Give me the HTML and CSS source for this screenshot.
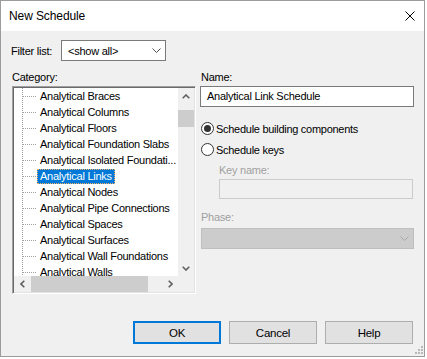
FILE: index.html
```html
<!DOCTYPE html>
<html>
<head>
<meta charset="utf-8">
<link rel="stylesheet" href="styles.css">
</head>
<body>
<div class="window">
  <div class="titlebar">
    <span class="title">New Schedule</span>
    <svg class="close" width="10" height="10" viewBox="0 0 10 10"><path d="M0.5 0.5L9.5 9.5M9.5 0.5L0.5 9.5" stroke="#000" stroke-width="1" fill="none"/></svg>
  </div>
  <div class="content">
    <div class="filter-row">
      <span class="filter-label">Filter list:</span>
      <div class="combo">
        <span class="combo-text">&lt;show all&gt;</span>
        <svg width="9" height="5" viewBox="0 0 9 5"><path d="M0.5 0.5L4.5 4.5L8.5 0.5" stroke="#555" fill="none"/></svg>
      </div>
    </div>
    <div class="main">
      <div class="left">
        <div class="label">Category:</div>
        <div class="tree">
          <div class="list">
            <div class="row"><span class="conn"></span><span class="item">Analytical Braces</span></div>
            <div class="row"><span class="conn"></span><span class="item">Analytical Columns</span></div>
            <div class="row"><span class="conn"></span><span class="item">Analytical Floors</span></div>
            <div class="row"><span class="conn"></span><span class="item">Analytical Foundation Slabs</span></div>
            <div class="row"><span class="conn"></span><span class="item">Analytical Isolated Foundati...</span></div>
            <div class="row"><span class="conn"></span><span class="item selected">Analytical Links</span></div>
            <div class="row"><span class="conn"></span><span class="item">Analytical Nodes</span></div>
            <div class="row"><span class="conn"></span><span class="item">Analytical Pipe Connections</span></div>
            <div class="row"><span class="conn"></span><span class="item">Analytical Spaces</span></div>
            <div class="row"><span class="conn"></span><span class="item">Analytical Surfaces</span></div>
            <div class="row"><span class="conn"></span><span class="item">Analytical Wall Foundations</span></div>
            <div class="row"><span class="conn"></span><span class="item">Analytical Walls</span></div>
          </div>
          <div class="vscroll">
            <div class="sbtn"><svg width="8" height="5" viewBox="0 0 8 5"><path d="M0.7 4.3L4 1L7.3 4.3" stroke="#606060" stroke-width="1.6" fill="none"/></svg></div>
            <div class="vtrack"><div class="vthumb"></div></div>
            <div class="sbtn"><svg width="8" height="5" viewBox="0 0 8 5"><path d="M0.7 0.7L4 4L7.3 0.7" stroke="#606060" stroke-width="1.6" fill="none"/></svg></div>
          </div>
          <div class="hscroll">
            <div class="sbtn"><svg width="5" height="8" viewBox="0 0 5 8"><path d="M4.3 0.7L1 4L4.3 7.3" stroke="#606060" stroke-width="1.6" fill="none"/></svg></div>
            <div class="htrack"><div class="hthumb"></div></div>
            <div class="sbtn"><svg width="5" height="8" viewBox="0 0 5 8"><path d="M0.7 0.7L4 4L0.7 7.3" stroke="#606060" stroke-width="1.6" fill="none"/></svg></div>
          </div>
          <div class="corner"></div>
        </div>
      </div>
      <div class="right">
        <div class="label">Name:</div>
        <div class="textbox">Analytical Link Schedule</div>
        <div class="radio-row first">
          <svg width="13" height="13" viewBox="0 0 13 13"><circle cx="6.5" cy="6.5" r="6" fill="#fff" stroke="#333"/><circle cx="6.5" cy="6.5" r="3.5" fill="#333"/></svg>
          <span>Schedule building components</span>
        </div>
        <div class="radio-row">
          <svg width="13" height="13" viewBox="0 0 13 13"><circle cx="6.5" cy="6.5" r="6" fill="#fff" stroke="#333"/></svg>
          <span>Schedule keys</span>
        </div>
        <div class="label disabled indent">Key name:</div>
        <div class="textbox disabled-box indent"></div>
        <div class="label disabled phase-label">Phase:</div>
        <div class="combo disabled-combo">
          <span></span>
          <svg width="9" height="5" viewBox="0 0 9 5"><path d="M0.5 0.5L4.5 4.5L8.5 0.5" stroke="#a8a8a8" fill="none"/></svg>
        </div>
      </div>
    </div>
    <div class="buttons">
      <div class="btn default">OK</div>
      <div class="btn">Cancel</div>
      <div class="btn">Help</div>
    </div>
    <div class="grip">
      <i class="g13"></i>
      <i class="g22"></i><i class="g23"></i>
      <i class="g31"></i><i class="g32"></i><i class="g33"></i>
    </div>
  </div>
</div>
</body>
</html>
```
FILE: styles.css
```css
html, body {
  margin: 0;
  padding: 0;
  background: #ffffff;
}
body {
  font-family: "Liberation Sans", Arial, sans-serif;
  font-size: 11px;
  letter-spacing: -0.25px;
  color: #000;
}
.window {
  width: 425px;
  height: 357px;
  box-sizing: border-box;
  border: 1px solid #9c9c9c;
  display: flex;
  flex-direction: column;
}
.titlebar {
  height: 30px;
  flex: none;
  background: #fff;
  display: flex;
  align-items: center;
  justify-content: space-between;
  padding: 0 9px 0 8px;
}
.title {
  font-size: 12px;
  letter-spacing: -0.1px;
}
.close {
  display: block;
}
.content {
  flex: 1;
  background: #f0f0f0;
  padding: 9px 10px 0 10px;
  position: relative;
}
.filter-row {
  display: flex;
  align-items: center;
  height: 21px;
}
.filter-label {
  width: 50px;
  flex: none;
}
.combo {
  box-sizing: border-box;
  width: 105px;
  height: 21px;
  border: 1px solid #7a7a7a;
  background: #fff;
  display: flex;
  align-items: center;
  justify-content: space-between;
  padding: 0 4px 0 6px;
}
.combo svg { display: block; }
.main {
  display: grid;
  grid-template-columns: 184px 214px;
  column-gap: 4px;
  margin-top: 10px;
  margin-left: 1px;
}
.label {
  height: 13px;
  line-height: 13px;
  margin-bottom: 2px;
}
.tree {
  box-sizing: border-box;
  width: 184px;
  height: 208px;
  border-style: solid;
  border-width: 1px;
  border-color: #a0a0a0 #ffffff #ffffff #a0a0a0;
  box-shadow: inset 1px 1px 0 #696969, inset -1px -1px 0 #e3e3e3;
  padding: 1px;
  display: grid;
  grid-template-columns: 1fr 16px;
  grid-template-rows: 1fr 16px;
}
.list {
  background: #fff;
  overflow: hidden;
}
.row {
  height: 16px;
  display: flex;
  align-items: center;
  white-space: nowrap;
}
.conn {
  flex: none;
  width: 15px;
  height: 16px;
  margin-left: 8px;
  background-image:
    linear-gradient(to bottom, #a0a0a0 50%, transparent 50%),
    linear-gradient(to right, #a0a0a0 50%, transparent 50%);
  background-size: 1px 2px, 2px 1px;
  background-repeat: repeat-y, repeat-x;
  background-position: 0 0, 1px 8px;
}
.item {
  box-sizing: border-box;
  height: 15px;
  line-height: 13px;
  padding: 0 2px;
  border: 1px solid transparent;
}
.item.selected {
  background: #0078d7;
  color: #fff;
  border: 1px dotted #f5b060;
}
.vscroll {
  background: #f0f0f0;
  display: flex;
  flex-direction: column;
}
.sbtn {
  width: 16px;
  height: 16px;
  flex: none;
  display: flex;
  align-items: center;
  justify-content: center;
}
.sbtn svg { display: block; }
.vtrack {
  flex: 1;
}
.vthumb {
  margin-top: 6px;
  height: 17px;
  background: #cdcdcd;
}
.hscroll {
  background: #f0f0f0;
  display: flex;
}
.htrack {
  flex: 1;
}
.hthumb {
  margin-left: 1px;
  width: 117px;
  height: 16px;
  background: #cdcdcd;
}
.corner {
  background: #f0f0f0;
}
.right {
  display: flex;
  flex-direction: column;
  align-items: flex-start;
}
.right .label {
  margin-left: 1px;
}
.textbox {
  box-sizing: border-box;
  width: 214px;
  height: 21px;
  border: 1px solid #7a7a7a;
  background: #fff;
  line-height: 19px;
  padding: 0 6px;
}
.radio-row {
  height: 21px;
  display: flex;
  align-items: center;
  gap: 2px;
  margin-left: 1px;
  letter-spacing: -0.28px;
}
.radio-row svg { display: block; }
.radio-row.first {
  margin-top: 11px;
}
.disabled {
  color: #a0a0a0;
}
.indent {
  margin-left: 19px;
}
.right .label.indent {
  margin-left: 19px;
  margin-top: 4px;
  margin-bottom: 2px;
}
.disabled-box {
  width: 194px;
  height: 20px;
  background: #f0f0f0;
  border-color: #cccccc;
}
.right .label.phase-label {
  margin-top: 12px;
  margin-bottom: 4px;
}
.disabled-combo {
  width: 213px;
  margin-left: 1px;
  background: #cccccc;
  border-color: #bfbfbf;
}
.buttons {
  display: flex;
  justify-content: flex-end;
  gap: 8px;
  margin-top: 27px;
  width: 402px;
}
.btn {
  box-sizing: border-box;
  width: 88px;
  height: 23px;
  background: #e1e1e1;
  border: 1px solid #adadad;
  display: flex;
  align-items: center;
  justify-content: center;
  font-size: 11.5px;
}
.btn.default {
  border: 2px solid #0078d7;
}
.grip {
  position: absolute;
  right: 1px;
  bottom: 2px;
  display: grid;
  grid-template-columns: repeat(3, 2px);
  grid-template-rows: repeat(3, 2px);
  gap: 1px;
}
.grip i {
  display: block;
  width: 2px;
  height: 2px;
  background: #b8b8b8;
}
.grip .g13 { grid-area: 1 / 3; }
.grip .g22 { grid-area: 2 / 2; }
.grip .g23 { grid-area: 2 / 3; }
.grip .g31 { grid-area: 3 / 1; }
.grip .g32 { grid-area: 3 / 2; }
.grip .g33 { grid-area: 3 / 3; }
```
